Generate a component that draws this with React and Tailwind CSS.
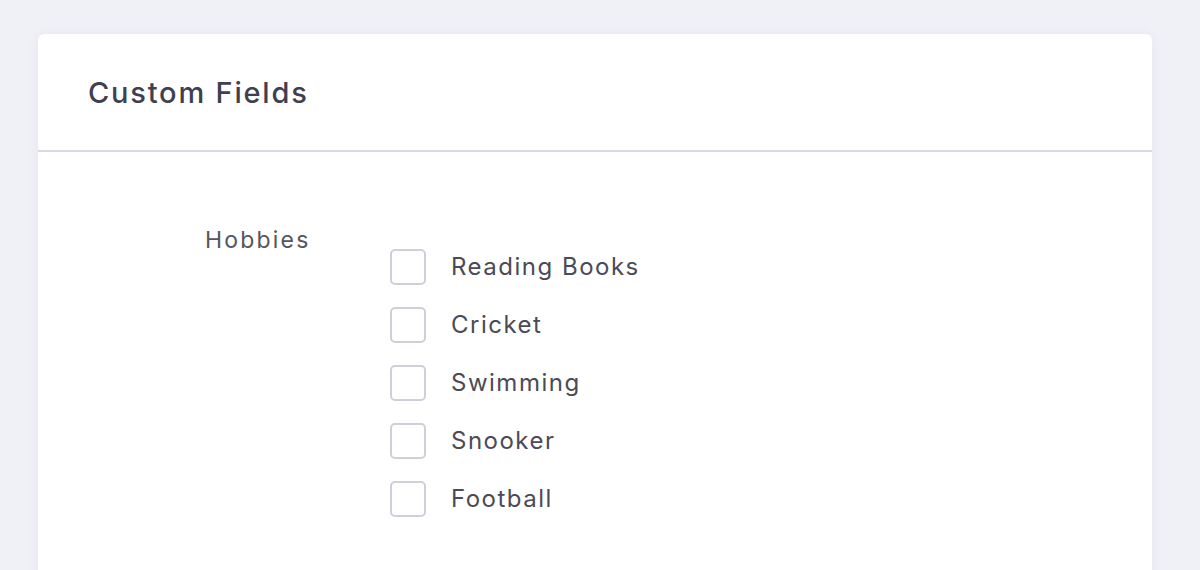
import React from 'react';

const hobbies = ['Reading Books', 'Cricket', 'Swimming', 'Snooker', 'Football'];

const App = () => {
    return (
        <div className="min-h-screen bg-[#f0f0f7] pt-[34px] pl-[38px] pr-[48px]" style={{ fontFamily: 'Inter, "Open Sans", sans-serif' }}>
            <div className="bg-white rounded-t-md shadow-[0_0_12px_rgba(82,63,105,0.05)] min-h-[560px]">
                <div className="h-[118px] flex items-center px-[50px] border-b-2 border-[#d7d9e3]">
                    <h3 className="text-[29px] font-medium text-[#3f3f52] tracking-[1.8px] pt-[1px]">Custom Fields</h3>
                </div>

                <div className="flex pt-[74px]">
                    <label className="w-[274px] text-right text-[23px] text-[#55555f] leading-[28px] tracking-[2.2px]">
                        <span className="inline-block w-[107px] text-left">Hobbies</span>
                    </label>
                    <div className="flex flex-col gap-[22px] pt-[23px] pl-[78px]">
                        {hobbies.map((h) => (
                            <label key={h} className="flex items-center gap-[25px] cursor-pointer">
                                <span className="w-[36px] h-[36px] rounded-[5px] border-2 border-[#cdd0da] bg-white"></span>
                                <span className="text-[24px] text-[#4a4b55] leading-[36px] tracking-[1.5px]">{h}</span>
                            </label>
                        ))}
                    </div>
                </div>
            </div>
        </div>
    );
};

export default App;
